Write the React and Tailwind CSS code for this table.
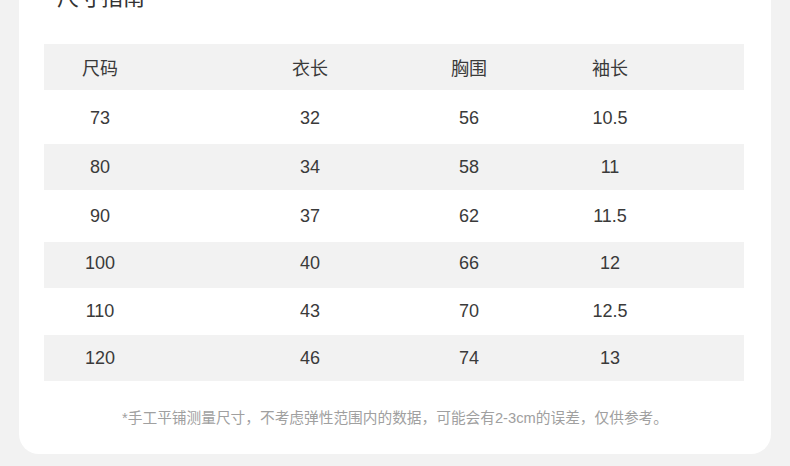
const headers = ['尺码', '衣长', '胸围', '袖长'];

const rows = [
  { cells: ['73', '32', '56', '10.5'], h: 'h-[54px] pt-[2px]', bg: '' },
  { cells: ['80', '34', '58', '11'], h: 'h-[46px]', bg: 'bg-[#f2f2f2]' },
  { cells: ['90', '37', '62', '11.5'], h: 'h-[52px]', bg: '' },
  { cells: ['100', '40', '66', '12'], h: 'h-[46px] pb-[4px]', bg: 'bg-[#f2f2f2]' },
  { cells: ['110', '43', '70', '12.5'], h: 'h-[47px]', bg: '' },
  { cells: ['120', '46', '74', '13'], h: 'h-[46px]', bg: 'bg-[#f2f2f2]' },
];

// column offsets, every cell is 80px wide and centred
const gaps = ['ml-[16px]', 'ml-[130px]', 'ml-[79px]', 'ml-[61px]'];

const Row = ({ cells, className }) => (
  <div className={`flex items-center w-[700px] ${className}`}>
    {cells.map((c, i) => (
      <div key={i} className={`w-[80px] shrink-0 text-center ${gaps[i]}`}>
        {c}
      </div>
    ))}
  </div>
);

export default function App() {
  return (
    <div
      className="w-[790px] h-[466px] overflow-hidden bg-[#f2f2f2]"
      style={{ fontFamily: '"Liberation Sans", "Noto Sans CJK SC", sans-serif' }}
    >
      <div className="mx-[19px] -mt-[40px] pt-[27px] pb-[26px] bg-white rounded-[20px]">
        <div className="pl-[38px] h-[22px] text-[22px] leading-[22px] text-[#333]">尺寸指南</div>

        <div className="mt-[35px] ml-[25px] text-[18px] text-[#3a3a3a]">
          <Row cells={headers} className="h-[46px] pt-[4px] bg-[#f2f2f2]" />
          {rows.map((r, i) => (
            <Row key={i} cells={r.cells} className={`${r.h} ${r.bg}`} />
          ))}
        </div>

        <p className="mt-[27px] text-center text-[14.7px] leading-[20px] text-[#a0a0a0]">
          *手工平铺测量尺寸，不考虑弹性范围内的数据，可能会有2-3cm的误差，仅供参考。
        </p>
      </div>
    </div>
  );
}
